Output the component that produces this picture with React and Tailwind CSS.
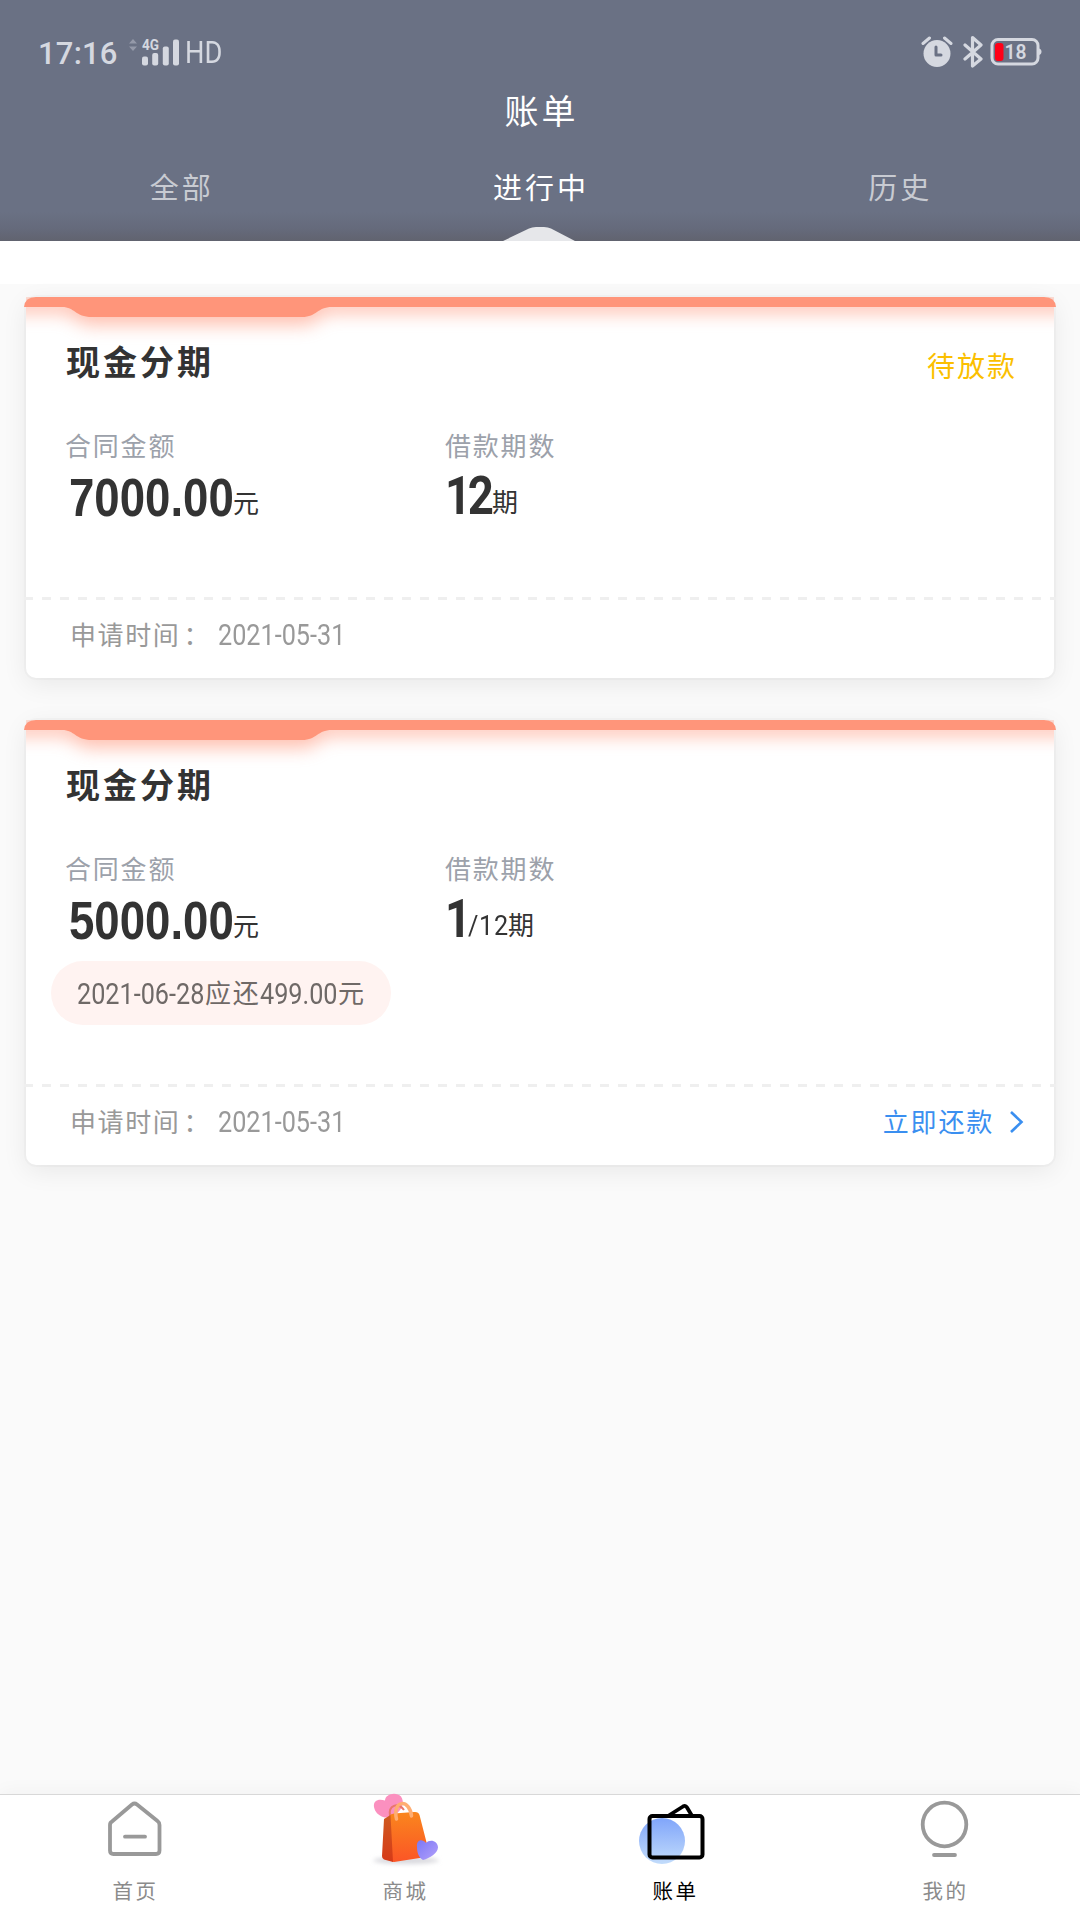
import React, { useState } from "react";

const TABS = ["全部", "进行中", "历史"];

const BILLS = [
  { id: 1, title: "现金分期", amount: "7000.00", current: "12", total: "", status: "待放款", applied: "2021-05-31" },
  {
    id: 2,
    title: "现金分期",
    amount: "5000.00",
    current: "1",
    total: "/12",
    due: { date: "2021-06-28", amount: "499.00" },
    applied: "2021-05-31",
    payable: true,
  },
];

// condensed digits: Roboto squeezed horizontally inside a fixed-width box
function Num({ className = "", children }) {
  return (
    <span className={`inline-block origin-left whitespace-nowrap font-[Roboto,sans-serif] ${className}`}>
      {children}
    </span>
  );
}

function StatusBar() {
  return (
    <div className="flex h-[84px] items-center justify-between pl-[38px] pr-[38px] pt-5 text-[#d5d8e0]">
      <div className="flex items-center">
        <span className="w-[91px] pt-[3px] font-[Roboto,sans-serif] text-[31px] font-medium leading-8 tracking-[0.2px]">17:16</span>
        <svg className="h-8 w-[52px]" viewBox="0 0 52 32" fill="currentColor">
          <path d="M0 7.500 4 3l4 4.500zM0 10.500h8L4 15z" opacity="0.4" />
          <rect x="13" y="20.500" width="6" height="9" rx="2" />
          <rect x="23.200" y="17" width="6" height="12.500" rx="2" />
          <rect x="33.800" y="10.500" width="6" height="19" rx="2" />
          <rect x="44" y="3.500" width="6" height="26" rx="2" />
          <text x="13" y="13.500" fontSize="15" fontWeight="700" fontFamily="Roboto" textLength="17" lengthAdjust="spacingAndGlyphs">4G</text>
        </svg>
        <Num className="ml-[4px] scale-x-[0.88] pt-[2px] text-[31px] leading-8">HD</Num>
      </div>
      <div className="flex items-center">
        <svg className="h-[34px] w-8" viewBox="0 0 32 34" fill="none">
          <circle cx="16" cy="18.500" r="13.500" fill="currentColor" />
          <path d="M2 8.500 8.500 3M30 8.500 23.500 3" stroke="currentColor" strokeWidth="3" strokeLinecap="round" />
          <path d="M15 12v8h5" stroke="#6a7184" strokeWidth="3" strokeLinecap="round" strokeLinejoin="round" />
        </svg>
        <svg className="ml-[10px] h-[34px] w-5" viewBox="0 0 20 34" fill="none" stroke="currentColor" strokeWidth="3.200" strokeLinejoin="round" strokeLinecap="round">
          <path d="M2 10l16 14-8.500 7V2.500L18 10 2 24" />
        </svg>
        <svg className="ml-[7px] h-[34px] w-[52px]" viewBox="0 0 52 34">
          <rect x="2" y="4.500" width="46" height="24.500" rx="6" fill="none" stroke="currentColor" strokeWidth="3" />
          <path d="M48.500 13.500c4 0 4 6.500 0 6.500z" fill="currentColor" />
          <rect x="5" y="8" width="8.500" height="18" rx="3" fill="#ff0018" />
          <text x="14.500" y="23.500" fontSize="20" fontWeight="600" fontFamily="Roboto" fill="currentColor" textLength="22" lengthAdjust="spacingAndGlyphs">18</text>
        </svg>
      </div>
    </div>
  );
}

function BillCard({ bill }) {
  return (
    <section className="relative mx-[26px] rounded-[10px] bg-white shadow-[0_6px_26px_rgba(0,0,0,0.075),0_0_0_2px_rgba(0,0,0,0.018)]">
      <svg className="absolute -left-[2px] top-0 h-[60px] w-[1032px]" viewBox="0 0 1032 60">
        <defs>
          <clipPath id={`clip${bill.id}`}>
            <path d="M2 0h1028v60H2z" />
          </clipPath>
          <filter id={`glow${bill.id}`} x="-5%" y="-50%" width="110%" height="400%">
            <feGaussianBlur stdDeviation="9" />
          </filter>
        </defs>
        <g clipPath={`url(#clip${bill.id})`}>
          <path
            d="M-40 0H1072V16H308C294 16 294 28 278 28H68C52 28 50 16 38 16H-40Z"
            fill="#ff957a"
            opacity="0.6"
            filter={`url(#glow${bill.id})`}
          />
        </g>
        <path d="M0 10Q1 0 12 0H1020Q1031 0 1032 10H308C293 10 293 20 278 20H68C51 20 51 10 38 10Z" fill="#ff957a" />
      </svg>

      <div className={bill.due ? "relative h-[364px] pt-[39px]" : "relative h-[300px] pt-[39px]"}>
        <div className="flex h-[50px] items-center justify-between pl-[40px] pr-[37px]">
          <h2 className="text-[34px] font-bold leading-[50px] tracking-[3px] text-[#333]">{bill.title}</h2>
          {bill.status && <span className="pt-[8px] text-[28px] leading-[44px] tracking-[2px] text-[#fbbf00]">{bill.status}</span>}
        </div>
        <div className="flex pl-[39px] pt-[39px]">
          <div className="w-[380px]">
            <div className="h-[40px] text-[26px] leading-[40px] tracking-[1.8px] text-[#9ca1aa]">合同金额</div>
            <div className="flex h-[60px] items-baseline pl-[4px]">
              <span className="inline-block w-[164px] origin-left translate-y-[3px] scale-x-[0.86] whitespace-nowrap font-['Liberation_Sans',sans-serif] text-[53px] font-bold leading-[60px] text-[#333]">
                {bill.amount}
              </span>
              <span className="text-[26px] leading-[40px] text-[#333]">元</span>
            </div>
          </div>
          <div>
            <div className="h-[40px] text-[26px] leading-[40px] tracking-[1.8px] text-[#9ca1aa]">借款期数</div>
            <div className="-mt-px flex h-[60px] items-baseline">
              <Num
                className={`translate-y-[2px] scale-x-[0.86] text-[53px] font-bold leading-[60px] tracking-[-4px] text-[#333] ${bill.total ? "w-[23px]" : "w-[47px]"}`}
              >
                {bill.current}
              </Num>
              {bill.total && <Num className="w-[40px] scale-x-[0.9] text-[28px] tracking-[0.8px] text-[#333]">{bill.total}</Num>}
              <span className="text-[26px] leading-[40px] text-[#333]">期</span>
            </div>
          </div>
        </div>
        {bill.due && (
          <div className="ml-[25px] mt-[13px] flex h-16 w-[340px] items-center whitespace-nowrap rounded-full bg-[#fff3f1] pl-[26px] text-[26px] text-[#6f6967]">
            <Num className="w-[128px] scale-x-[0.87] pt-[3px] text-[29px]">{bill.due.date}</Num>
            <span className="w-[55px] pb-[4px] tracking-[1.8px]">应还</span>
            <Num className="w-[78px] scale-x-[0.87] pt-[3px] text-[29px]">{bill.due.amount}</Num>
            <span className="pb-[4px]">元</span>
          </div>
        )}
      </div>

      <div className="-mx-[2px] h-[3px] bg-[repeating-linear-gradient(90deg,#efefef_0_9px,transparent_9px_18px)]" />
      <div className="flex h-[78px] items-center pb-[6px] pl-[44px] pr-[30px] text-[26px] text-[#999]">
        <span className="flex w-[148px] whitespace-nowrap pb-[5px] tracking-[1.6px]">
          申请时间<span className="pl-[3px]">：</span>
        </span>
        <Num className="scale-x-[0.87] text-[29px]">{bill.applied}</Num>
        {bill.payable && (
          <button className="ml-auto flex items-center text-[#3a8ff0]">
            <span className="pb-[5px] tracking-[1.8px]">立即还款</span>
            <svg className="mb-[2px] ml-[15px] h-6 w-[15px]" viewBox="0 0 15 24" fill="none" stroke="currentColor" strokeWidth="2.600">
              <path d="M2 2l10.500 10L2 22" />
            </svg>
          </button>
        )}
      </div>
    </section>
  );
}

function HomeIcon() {
  return (
    <svg className="h-[70px] w-[80px]" viewBox="0 0 80 70" fill="none" stroke="#999" strokeWidth="3.800" strokeLinejoin="round" strokeLinecap="round">
      <path d="M17 26.500Q15 27.500 15 30V55.500Q15 59 18.500 59H61Q64.500 59 64.500 55.500V30Q64.500 27.500 62.500 26L42 9.500Q39.500 7.500 37 9.500Z" />
      <path d="M30 41.700H50" />
    </svg>
  );
}

function MallIcon() {
  return (
    <svg className="h-[70px] w-[80px] overflow-visible" viewBox="0 0 80 70">
      <defs>
        <linearGradient id="bag" x1="0" y1="0" x2="0" y2="1">
          <stop offset="0" stopColor="#fa861d" />
          <stop offset="1" stopColor="#fb5526" />
        </linearGradient>
        <linearGradient id="side" x1="0" y1="0" x2="0" y2="1">
          <stop offset="0" stopColor="#cf5a20" />
          <stop offset="1" stopColor="#d63a18" />
        </linearGradient>
        <linearGradient id="violet" x1="0" y1="0" x2="1" y2="1">
          <stop offset="0" stopColor="#7b78f5" />
          <stop offset="1" stopColor="#b3a0fb" />
        </linearGradient>
        <filter id="soft" x="-20%" y="-80%" width="140%" height="260%">
          <feGaussianBlur stdDeviation="2" />
        </filter>
      </defs>
      <ellipse cx="41" cy="65.500" rx="33" ry="3.500" fill="#d9d9de" filter="url(#soft)" />
      <path d="M9 12C8 5 14 3.500 20 5.500C20-1 31-4 36 1.500C40 7 37 15 31 19C27 22 22 23.500 18 22C13 20 10 17 9 12Z" fill="#fb90bf" />
      <path d="M25 21C23 10 33 7 39 15" fill="none" stroke="#e9776b" strokeWidth="2" />
      <path d="M24 21.500Q26 18.500 29 18.500L49 17Q53.500 16.500 54.500 20L64 57Q65 61 61 62L29 67Q26 67 26 64Z" fill="url(#bag)" />
      <path d="M19 24 25.500 20 28 67 19 64.500Q17 64 17 61Z" fill="url(#side)" />
      <path d="M31.500 24C27 4 45 4 46.500 21" fill="none" stroke="#ffad72" strokeWidth="3.500" strokeLinecap="round" />
      <path d="M52 52C51 45 57 43 61 48C65 43.500 73 46 73 52.500C72.500 58.500 65 63 58 65C54 63 52 58 52 52Z" fill="url(#violet)" />
    </svg>
  );
}

function BillIcon() {
  return (
    <svg className="h-[70px] w-[80px]" viewBox="0 0 80 70" fill="none">
      <defs>
        <linearGradient id="disc" x1="0" y1="0" x2="0" y2="1">
          <stop offset="0" stopColor="#80a5fa" />
          <stop offset="1" stopColor="#c2dcfb" />
        </linearGradient>
      </defs>
      <circle cx="27" cy="46" r="23" fill="url(#disc)" />
      <rect x="14.500" y="21" width="53" height="41.500" rx="3" stroke="#000" strokeWidth="4" />
      <path d="M33 21 48 11.500Q50.500 10 52 12.500L56.500 20" stroke="#000" strokeWidth="3.800" />
    </svg>
  );
}

function MineIcon() {
  return (
    <svg className="h-[70px] w-[80px]" viewBox="0 0 80 70" fill="none" stroke="#999" strokeWidth="3.800" strokeLinecap="round">
      <circle cx="39.500" cy="29.500" r="21.800" />
      <path d="M29 60H50" />
    </svg>
  );
}

const NAV = [
  { label: "首页", icon: <HomeIcon /> },
  { label: "商城", icon: <MallIcon /> },
  { label: "账单", icon: <BillIcon /> },
  { label: "我的", icon: <MineIcon /> },
];

export default function App() {
  const [tab, setTab] = useState("进行中");
  const [page, setPage] = useState("账单");

  return (
    <div className="flex h-[1920px] w-[1080px] flex-col overflow-hidden bg-[#fafafa] font-['Noto_Sans_CJK_SC',sans-serif]">
      <header className="relative h-[241px] shrink-0 bg-[linear-gradient(180deg,#6a7184_88%,#656a7b_95%,#61636f_100%)]">
        <StatusBar />
        <h1 className="h-[52px] pl-[3px] text-center text-[34px] leading-[51px] tracking-[3px] text-white">账单</h1>
        <nav className="grid h-[100px] grid-cols-3 pl-[2px]">
          {TABS.map((name) => (
            <button
              key={name}
              onClick={() => setTab(name)}
              className={`h-[101px] text-[29px] tracking-[3px] ${tab === name ? "text-white" : "text-[#c8cbd2]"}`}
            >
              {name}
            </button>
          ))}
        </nav>
        <svg className="absolute bottom-0 left-[503px] h-[14px] w-[72px]" viewBox="0 0 72 14">
          <path d="M0 14 26 1.500Q29 0 33 0H41Q45 0 48 1.500L72 14Z" fill="#e6e7ea" />
        </svg>
      </header>
      <div className="h-[43px] shrink-0 bg-white" />

      <main className="flex flex-1 flex-col gap-[42px] pt-[13px]">
        {BILLS.map((bill) => (
          <BillCard key={bill.id} bill={bill} />
        ))}
      </main>

      <footer className="grid h-[126px] shrink-0 grid-cols-4 border-t border-[#d8d8d8] bg-white shadow-[0_-4px_16px_rgba(0,0,0,0.03)]">
        {NAV.map((item) => (
          <button key={item.label} onClick={() => setPage(item.label)} className="flex flex-col items-center">
            {item.icon}
            <span className={`mt-[8px] pl-px text-[20.5px] leading-[34px] tracking-[2.5px] ${page === item.label ? "text-black" : "text-[#8b8b8b]"}`}>
              {item.label}
            </span>
          </button>
        ))}
      </footer>
    </div>
  );
}
